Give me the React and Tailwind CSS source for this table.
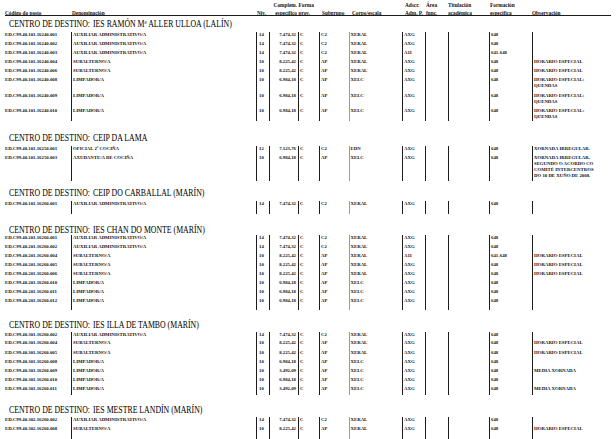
const cols =
  "grid grid-cols-[66px_185px_13px_29px_21px_30px_53px_23px_23px_41px_43px_1fr]";
const line = "border-l border-[#1c1c1c]";

const AUX = "AUXILIAR ADMINISTRATIVO/A";
const SUB = "SUBALTERNO/A";
const LIM = "LIMPADOR/A";
const HE = ["HORARIO ESPECIAL"];
const HEQ = ["HORARIO ESPECIAL:", "QUENDAS"];

const aux = (code, extra = {}) => ({ code, den: AUX, niv: "14", comp: "7.474,32", sub: "C2", corpo: "XERAL", ads: "AXG", form: "648", obs: [], ...extra });
const sub = (code, extra = {}) => ({ code, den: SUB, niv: "10", comp: "8.225,42", sub: "AP", corpo: "XERAL", ads: "AXG", form: "648", obs: HE, ...extra });
const lim = (code, extra = {}) => ({ code, den: LIM, niv: "10", comp: "6.984,18", sub: "AP", corpo: "XELC", ads: "AXG", form: "648", obs: [], ...extra });

const sections = [
  {
    name: "IES RAMÓN Mª ALLER ULLOA (LALÍN)",
    mt: "mt-[5px]",
    gap: "mb-[2.5px]",
    rows: [
      aux("ED.C99.40.101.16240.001"),
      aux("ED.C99.40.101.16240.002"),
      aux("ED.C99.40.101.16240.003", { ads: "A11", form: "641-648" }),
      sub("ED.C99.40.101.16240.004"),
      sub("ED.C99.40.101.16240.006"),
      lim("ED.C99.40.101.16240.008", { obs: HEQ, h: "h-[16px]" }),
      lim("ED.C99.40.101.16240.009", { obs: HEQ, h: "h-[15px]" }),
      lim("ED.C99.40.101.16240.010", { obs: HEQ, h: "h-[13.5px]" }),
    ],
  },
  {
    name: "CEIP DA LAMA",
    mt: "mt-[14px]",
    gap: "mb-[2.5px]",
    rows: [
      { code: "ED.C99.40.101.16250.001", den: "OFICIAL 2ª COCIÑA", niv: "12", comp: "7.123,76", sub: "C2", corpo: "EDN", ads: "AXG", form: "648", obs: ["XORNADA IRREGULAR."] },
      lim("ED.C99.40.101.16250.003", {
        den: "AXUDANTE/A DE COCIÑA",
        h: "h-[26.5px]",
        obs: ["XORNADA IRREGULAR,", "SEGUNDO O ACORDO CO", "COMITÉ INTERCENTROS", "DO 10 DE XUÑO DE 2008."],
      }),
    ],
  },
  {
    name: "CEIP DO CARBALLAL (MARÍN)",
    mt: "mt-[9px]",
    gap: "mb-[2.5px]",
    rows: [aux("ED.C99.40.101.16260.001", { h: "h-[13.5px]" })],
  },
  {
    name: "IES CHAN DO MONTE (MARÍN)",
    mt: "mt-[12.5px]",
    gap: "mb-0",
    rows: [
      aux("ED.C99.40.201.16260.001"),
      aux("ED.C99.40.201.16260.002"),
      sub("ED.C99.40.201.16260.004", { ads: "A11", form: "641-648" }),
      sub("ED.C99.40.201.16260.005"),
      sub("ED.C99.40.201.16260.006"),
      lim("ED.C99.40.201.16260.010"),
      lim("ED.C99.40.201.16260.011"),
      lim("ED.C99.40.201.16260.012", { h: "h-[12px]" }),
    ],
  },
  {
    name: "IES ILLA DE TAMBO (MARÍN)",
    mt: "mt-[12.5px]",
    gap: "mb-[1.5px]",
    rows: [
      aux("ED.C99.40.301.16260.002", { h: "h-[8px]" }),
      sub("ED.C99.40.301.16260.004", { h: "h-[10px]" }),
      sub("ED.C99.40.301.16260.005"),
      lim("ED.C99.40.301.16260.008"),
      lim("ED.C99.40.301.16260.009", { comp: "3.492,09", obs: ["MEDIA XORNADA"] }),
      lim("ED.C99.40.301.16260.010"),
      lim("ED.C99.40.301.16260.011", { comp: "3.492,09", obs: ["MEDIA XORNADA"] }),
    ],
  },
  {
    name: "IES MESTRE LANDÍN (MARÍN)",
    mt: "mt-[12.5px]",
    gap: "mb-[1.5px]",
    rows: [
      aux("ED.C99.40.302.16260.002"),
      sub("ED.C99.40.302.16260.008", { h: "h-[14px]" }),
    ],
  },
];

const headers = [
  { b: "Código do posto", cls: "" },
  { b: "Denominación", cls: "pl-[1px]" },
  { b: "Niv.", cls: "pl-[1px]" },
  { t: "Complem.", b: "específico", cls: "text-right pr-[1px] flex flex-col items-end" },
  { t: "Forma", b: "prov.", cls: "pl-[0.5px]" },
  { b: "Subgrupo", cls: "pl-[3px]" },
  { b: "Corpo/escala", cls: "pl-[3px]" },
  { t: "Adscr.", b: "Adm. P.", cls: "pl-[3px]" },
  { t: "Área", b: "func.", cls: "pl-[1px]" },
  { t: "Titulación", b: "académica", cls: "" },
  { t: "Formación", b: "específica", cls: "pl-[1px]" },
  { b: "Observación", cls: "" },
];

function Row({ r }) {
  return (
    <div className={`${cols} ${r.h ?? "h-[9px]"} leading-[6px] whitespace-nowrap`}>
      <div className="pt-[0.5px]">{r.code}</div>
      <div className={`${line} pl-[1px] pt-[0.5px]`}>{r.den}</div>
      <div className={`${line} pl-[2px] pt-[0.5px]`}>{r.niv}</div>
      <div className={`${line} pr-[2px] pt-[0.5px] text-right`}>{r.comp}</div>
      <div className={`${line} pl-[1px] pt-[0.5px]`}>C</div>
      <div className={`${line} pl-[1px] pt-[0.5px]`}>{r.sub}</div>
      <div className="border-l-[1.5px] border-[#9b9b9b] pl-[0.5px] pt-[0.5px]">{r.corpo}</div>
      <div className={`${line} pl-[1px] pt-[0.5px]`}>{r.ads}</div>
      <div className={line}></div>
      <div className={line}></div>
      <div className={`${line} pl-[1px] pt-[0.5px]`}>{r.form}</div>
      <div className={`${line} pl-[1px] pt-[0.5px]`}>
        {r.obs.map((o) => (
          <div key={o}>{o}</div>
        ))}
      </div>
    </div>
  );
}

function Section({ s }) {
  return (
    <div className={s.mt}>
      <div className={`h-[8px] leading-[8px] pl-[4px] text-[7.8px] text-black whitespace-nowrap origin-left scale-y-[1.2] ${s.gap}`}>
        <span>CENTRO DE DESTINO:</span>
        <span className="ml-[3px]">{s.name}</span>
      </div>
      <div className="text-[4.8px] font-bold">
        {s.rows.map((r) => (
          <Row key={r.code} r={r} />
        ))}
      </div>
    </div>
  );
}

export default function App() {
  return (
    <div className="w-[616px] h-[439px] overflow-hidden bg-white text-[#111] [font-family:'Liberation_Serif','Times_New_Roman',serif]">
      <div className="pl-[5px] pr-[5px]">
        <div className={`${cols} h-[16px] border-b border-[#1c1c1c] text-[5.3px] font-bold pt-[1px] whitespace-nowrap`}>
          {headers.map((h, i) => (
            <div key={i} className={h.cls}>
              <div className="h-[8px] leading-[8px]">{h.t ?? "\u00a0"}</div>
              <div className="h-[8px] leading-[8px]">{h.b}</div>
            </div>
          ))}
        </div>
        {sections.map((s) => (
          <Section key={s.name} s={s} />
        ))}
      </div>
    </div>
  );
}
